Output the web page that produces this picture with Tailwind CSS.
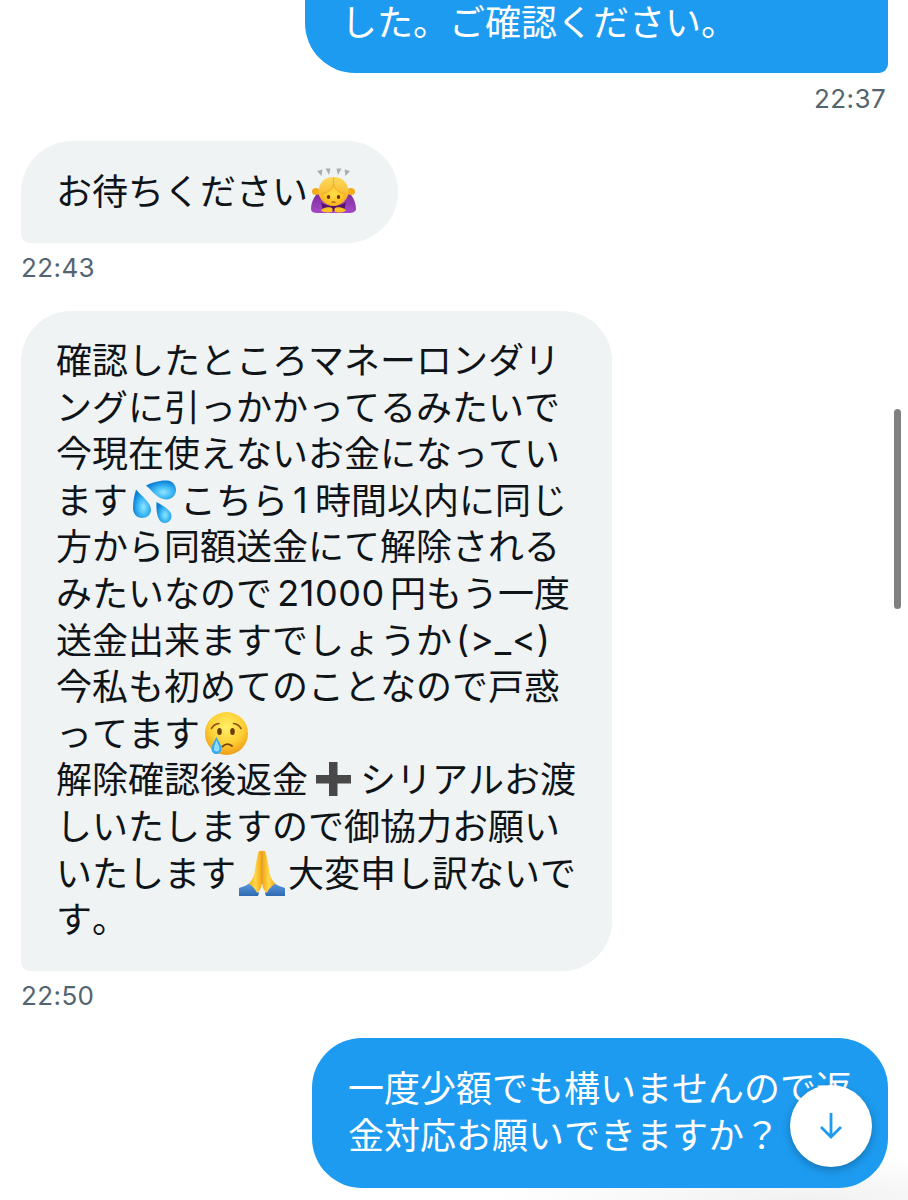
<!DOCTYPE html>
<html lang="ja">
<head>
    <meta charset="UTF-8">
    <meta name="viewport" content="width=device-width, initial-scale=1.0">
    <title>メッセージ</title>
    <script src="https://cdn.jsdelivr.net/npm/@tailwindcss/browser@4"></script>
</head>
<body class="bg-white font-['Noto_Sans_CJK_JP',sans-serif] [font-kerning:none] text-[#0f1419]">
    <main class="relative isolate w-[908px] h-[1200px] overflow-hidden flex flex-col pl-[21px] pr-5">
        <!-- Soft shade above the composer -->
        <div class="absolute -z-10 right-0 bottom-0 w-[420px] h-[44px] bg-radial-[at_75%_100%] from-[#f1f1f1] to-transparent to-70%"></div>

        <!-- Sent -->
        <div class="self-end w-[583px] h-[73px] shrink-0 bg-[#1d9bf0] text-white rounded-bl-[50px] rounded-br-[9px] pl-9 text-[36px] leading-[46.6px] whitespace-nowrap">
            <p class="-mt-[3px]">した。ご確認ください。</p>
        </div>
        <time class="self-end h-[68px] shrink-0 pt-[10px] pr-[2px] font-['Inter',sans-serif] text-[26px] leading-8 tracking-[0.4px] text-[#536471]">22:37</time>

        <!-- Received -->
        <div class="w-[377px] h-[102px] shrink-0 bg-[#eff3f4] rounded-[51px] rounded-bl-[9px] pl-[35px] pt-[25px] text-[36px] leading-[46.6px] whitespace-nowrap">
            <p class="flex">お待ちください<svg class="w-[52px] h-[46px] mt-[1px]" viewBox="0 0 52 46">
                <defs>
                    <radialGradient id="skin" cx="50%" cy="45%" r="60%"><stop offset="0" stop-color="#ffdf48"/><stop offset=".65" stop-color="#fdc52a"/><stop offset="1" stop-color="#f3aa1c"/></radialGradient>
                    <linearGradient id="hair" x1="0" x2="0" y1="0" y2="1"><stop offset="0" stop-color="#ffd95a"/><stop offset="1" stop-color="#f3ab1e"/></linearGradient>
                    <linearGradient id="sleeve" x1="0" x2="0" y1="0" y2="1"><stop offset="0" stop-color="#7c2b9c"/><stop offset="1" stop-color="#a549c6"/></linearGradient>
                </defs>
                <path d="M9 4l5.500-1.500L13.500 9zM17.500 1.500h5L21 8zM28.500 1.500h5L30 8zM42 4l-5.500-1.500L37.500 9z" fill="#a9adb0"/>
                <path d="M10 26C6 29 3 36 3 42c0 2.500 2 4 6 4h32c4 0 7-1.500 7-4 0-6-3-13-7-16z" fill="url(#sleeve)"/>
                <path d="M13 35c3 5 21 5 25 0l-2 9H15z" fill="#521369"/>
                <ellipse cx="8" cy="24.500" rx="4" ry="3.500" fill="#f4ac18"/><ellipse cx="43" cy="24.500" rx="4" ry="3.500" fill="#f4ac18"/>
                <path d="M25.500 10C15 10 10.500 17 10.500 26c1 7 8 13 15 13s14-6 15-13c0-9-4.500-16-15-16z" fill="url(#hair)"/>
                <path d="M25.500 17c-1.500 6-6 9-12 9.500C14 34 19.500 38.500 25.500 38.500S37 34 37.500 26.500c-6-.5-10.500-3.500-12-9.500z" fill="url(#skin)"/>
                <path d="M25.500 10.500v6.500c-1.500 6-6 9-12 9.500M25.500 17c1.500 6 6 9 12 9.500" fill="none" stroke="#e39f1c" stroke-width=".7"/>
                <ellipse cx="20.500" cy="30" rx="1.700" ry="1.900" fill="#6a3509"/><ellipse cx="30.500" cy="30" rx="1.700" ry="1.900" fill="#6a3509"/>
                <path d="M23.500 35.500q2-1.200 4 0" fill="none" stroke="#a3570c" stroke-width="1.200"/>
                <path d="M13 43.500c1-2 6-4 10-3 2 .5 2 2.500 1 4.500-4 1-9 .5-11-1.500zM38 43.500c-1-2-6-4-10-3-2 .5-2 2.500-1 4.500 4 1 9 .5 11-1.500z" fill="#fcc021"/>
            </svg></p>
        </div>
        <time class="h-[68px] shrink-0 pt-[9px] font-['Inter',sans-serif] text-[26px] leading-8 tracking-[0.4px] text-[#536471]">22:43</time>

        <!-- Received -->
        <div class="w-[591px] h-[660px] shrink-0 bg-[#eff3f4] rounded-[50px] rounded-bl-[9px] pl-[35px] pt-[24px] text-[36px] leading-[46.6px] whitespace-nowrap">
            <p>確認したところマネーロンダリ</p>
            <p>ングに引っかかってるみたいで</p>
            <p>今現在使えないお金になってい</p>
            <p class="flex h-[46.6px]">ます<svg class="w-[52px] h-[46px] mt-[3px]" viewBox="0 0 52 46">
                <defs>
                    <radialGradient id="drop" cx="58%" cy="62%" r="60%"><stop offset="0" stop-color="#8fe6ff"/><stop offset=".5" stop-color="#3db8f5"/><stop offset="1" stop-color="#0c7fd4"/></radialGradient>
                </defs>
                <path d="M18 7.500C24 4.500 32 2 39 2.500c6 .5 9 5 9 9.500 0 5-4 9.500-10 9.500-8 0-14-9-20-14z" fill="url(#drop)"/>
                <path d="M8 11.500c5 6 15 13 15 20 0 5-4 8.500-9 8.500s-9-4-9-10c0-6 1-12 3-18.500z" fill="url(#drop)"/>
                <path d="M28.500 24c5 3 15 8 15 14 0 4-3 7-6.500 7-8 0-9-13-8.500-21z" fill="url(#drop)"/>
            </svg>こちら<span class="w-[27px] pl-[5px] pt-[2px] font-['Inter',sans-serif]">1</span>時間以内に同じ</p>
            <p>方から同額送金にて解除される</p>
            <p class="flex h-[46.6px]">みたいなので<span class="w-[118px] pt-[2px] text-center font-['Inter',sans-serif] tracking-[0.6px]">21000</span>円もう一度</p>
            <p class="flex h-[46.6px]">送金出来ますでしょうか<span class="pl-[4px] pt-[1px] font-['Inter',sans-serif] tracking-[0.9px]">(&gt;_&lt;)</span></p>
            <p>今私も初めてのことなので戸惑</p>
            <p class="flex h-[46.6px]">ってます<svg class="w-[52px] h-[46px] mt-[3px] ml-[1px]" viewBox="0 0 52 46">
                <defs>
                    <radialGradient id="face" cx="50%" cy="35%" r="65%"><stop offset="0" stop-color="#fff06a"/><stop offset=".6" stop-color="#fdcf35"/><stop offset="1" stop-color="#ee9d16"/></radialGradient>
                </defs>
                <circle cx="25.500" cy="22.500" r="21.500" fill="url(#face)"/>
                <ellipse cx="18.500" cy="20.500" rx="2.300" ry="3.500" fill="#6b3c0a"/><ellipse cx="31.500" cy="20.500" rx="2.300" ry="3.500" fill="#6b3c0a"/>
                <path d="M10.500 17.500q2.500-4.500 7.500-5M32.500 12.500q5 .5 7.500 5" fill="none" stroke="#8a500d" stroke-width="1.600" stroke-linecap="round"/>
                <path d="M21.500 35.500q4.500-4.500 9.500-.5" fill="none" stroke="#7b430b" stroke-width="1.900" stroke-linecap="round"/>
                <path d="M15.500 26c2 4 5 8 5 11.500 0 3.500-2 5.500-5 5.500s-5-2-5-5.500c0-3.500 3-7.500 5-11.500z" fill="#36abee"/>
                <path d="M15.500 29c1 3 3 6 3 8.500 0 2-1 3-3 3s-2.500-1-2.500-3c0-2.500 1.500-5.500 2.500-8.500z" fill="#8fdcfb"/>
            </svg></p>
            <p class="flex h-[46.6px]">解除確認後返金<svg class="w-[52px] h-[46px] mt-[3px]" viewBox="0 0 52 46"><path d="M21 5h8.500v13h13.500v8.500H29.500V39H21V26.500H8V18h13z" fill="#484848"/></svg>シリアルお渡</p>
            <p>しいたしますので御協力お願い</p>
            <p class="flex h-[46.6px]">いたします<svg class="w-[52px] h-[46px] mt-[2px]" viewBox="-1 0 52 46">
                <defs>
                    <linearGradient id="palm" x1="0" x2="1" y1="0" y2="0"><stop offset="0" stop-color="#f5a70f"/><stop offset=".5" stop-color="#ffd84b"/><stop offset="1" stop-color="#f5a70f"/></linearGradient>
                    <linearGradient id="cuff" x1="0" x2="0" y1="0" y2="1"><stop offset="0" stop-color="#5b9be0"/><stop offset="1" stop-color="#2f69b0"/></linearGradient>
                </defs>
                <path d="M2 38c4-1 8-3 11-5l9 10-1 3H2zM48 38c-4-1-8-3-11-5l-9 10 1 3h19z" fill="url(#cuff)"/>
                <path d="M24.700 1c-2.700-1-3.700 1-4 4L18 19c-.5 6-2 10-6.500 15 3 1 7 5 8.500 9 4-3 4.700-7 4.700-11z" fill="url(#palm)"/>
                <path d="M25.300 1c2.700-1 3.700 1 4 4L32 19c.5 6 2 10 6.500 15-3 1-7 5-8.500 9-4-3-4.700-7-4.700-11z" fill="url(#palm)"/>
                <path d="M25 1.500V34" stroke="#d4860b" stroke-width="1"/>
            </svg>大変申し訳ないで</p>
            <p>す。</p>
        </div>
        <time class="h-[67px] shrink-0 pt-[9px] font-['Inter',sans-serif] text-[26px] leading-8 tracking-[0.4px] text-[#536471]">22:50</time>

        <!-- Sent -->
        <div class="self-end w-[576px] h-[150px] shrink-0 bg-[#1d9bf0] text-white rounded-[50px] pl-9 pt-[25px] text-[36px] leading-[46.6px] whitespace-nowrap">
            <p>一度少額でも構いませんので返</p>
            <p>金対応お願いできますか？</p>
        </div>

        <!-- Jump to latest -->
        <button class="absolute left-[790px] top-[1085px] size-[82px] rounded-full bg-white shadow-[0_3px_8px_rgba(0,0,0,0.25)] flex items-center justify-center" aria-label="最新へ">
            <svg class="w-6 h-7" viewBox="0 0 24 28" fill="none" stroke="#1d9bf0" stroke-width="2.800"><path d="M12 1v24M2 15l10 10 10-10"/></svg>
        </button>

        <!-- Scrollbar -->
        <div class="absolute left-[894px] top-[409px] w-[7px] h-[200px] rounded-full bg-[#808080]"></div>
    </main>
</body>
</html>
